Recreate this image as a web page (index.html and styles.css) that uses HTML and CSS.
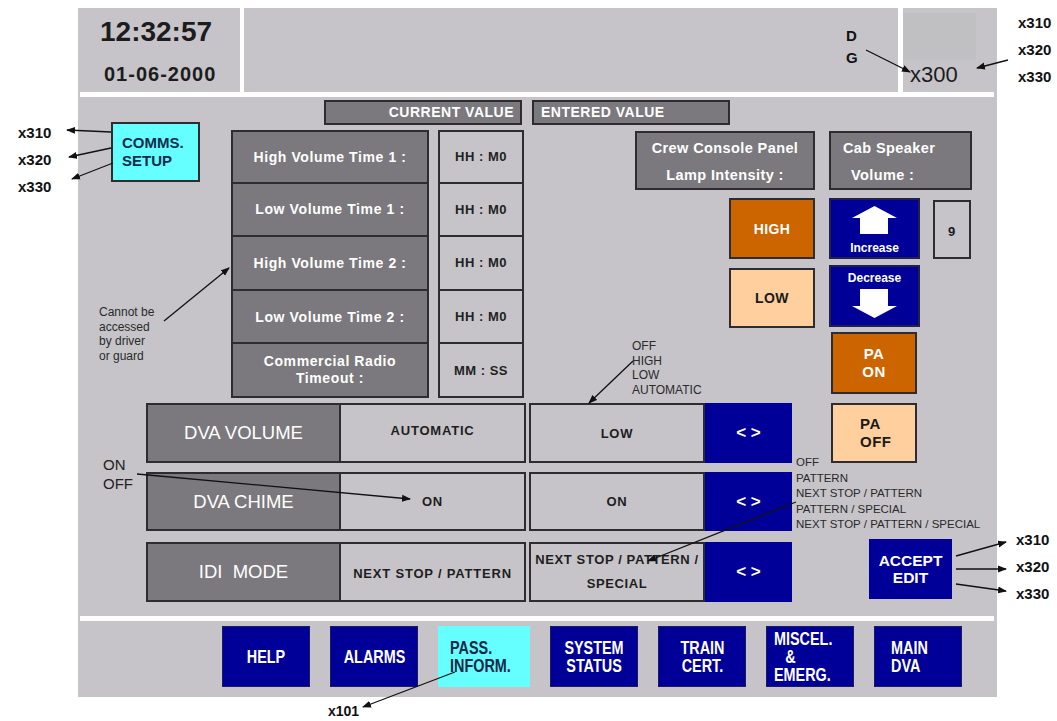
FILE: index.html
```html
<!DOCTYPE html>
<html>
<head>
    <title> Comms Setup </title>
    <link rel="stylesheet" href="styles.css">
</head>
<body>
<div class="sheet">
    <div class="panel">
        <div class="header">
            <div class="clock">
                <div class="time">12:32:57</div>
                <div class="date">01-06-2000</div>
            </div>
            <div class="message"></div>
            <div class="status">
                <div class="status-lamp"></div>
                <div class="status-id">x300</div>
            </div>
        </div>
        <div class="rule"></div>

        <div class="work">
            <div class="tabs">
                <div class="tab tab-current">CURRENT VALUE</div>
                <div class="tab tab-entered">ENTERED VALUE</div>
            </div>

            <div class="upper">
                <div class="comms">COMMS.<br>SETUP</div>

                <div class="times">
                    <div class="time-label">High Volume Time 1 :</div>
                    <div class="time-value">HH : M0</div>
                    <div class="time-label">Low Volume Time 1 :</div>
                    <div class="time-value">HH : M0</div>
                    <div class="time-label">High Volume Time 2 :</div>
                    <div class="time-value">HH : M0</div>
                    <div class="time-label">Low Volume Time 2 :</div>
                    <div class="time-value">HH : M0</div>
                    <div class="time-label time-label-small">Commercial Radio<br>Timeout :</div>
                    <div class="time-value">MM : SS</div>
                </div>

                <div class="controls">
                    <div class="control-heads">
                        <div class="head head-lamp">Crew Console Panel<br>Lamp Intensity :</div>
                        <div class="head head-cab">Cab Speaker<br><span class="indent">Volume :</span></div>
                    </div>
                    <div class="control-body">
                        <div class="lamp-col">
                            <div class="key key-orange key-high">HIGH</div>
                            <div class="key key-peach key-low">LOW</div>
                        </div>
                        <div class="volume-col">
                            <div class="key key-navy key-inc">
                                <svg class="arrow-up" width="45" height="28" viewBox="0 0 45 28"><path d="M22.5 0 L45 12 L36 12 L36 28 L8 28 L8 12 L0 12 Z" fill="#fff"/></svg>
                                <span class="key-small">Increase</span>
                            </div>
                            <div class="key key-navy key-dec">
                                <span class="key-small">Decrease</span>
                                <svg class="arrow-down" width="45" height="29" viewBox="0 0 45 29"><path d="M8 0 L36 0 L36 17 L45 17 L22.5 29 L0 17 L8 17 Z" fill="#fff"/></svg>
                            </div>
                            <div class="key key-orange key-pa-on">PA<br>ON</div>
                        </div>
                        <div class="level">9</div>
                    </div>
                </div>
            </div>

            <div class="lower">
                <div class="dva">
                    <div class="dva-row">
                        <div class="dva-label">DVA VOLUME</div>
                        <div class="dva-current dva-up">AUTOMATIC</div>
                        <div class="dva-entered">LOW</div>
                        <div class="dva-step">&lt; &gt;</div>
                    </div>
                    <div class="dva-row dva-row-chime">
                        <div class="dva-label">DVA CHIME</div>
                        <div class="dva-current">ON</div>
                        <div class="dva-entered">ON</div>
                        <div class="dva-step">&lt; &gt;</div>
                    </div>
                    <div class="dva-row dva-row-idi">
                        <div class="dva-label">IDI&nbsp; MODE</div>
                        <div class="dva-current dva-down">NEXT STOP / PATTERN</div>
                        <div class="dva-entered dva-two">NEXT STOP / PATTERN /<br>SPECIAL</div>
                        <div class="dva-step">&lt; &gt;</div>
                    </div>
                </div>
                <div class="side">
                    <div class="key key-peach key-pa-off">PA<br>OFF</div>
                    <div class="key key-navy key-accept">ACCEPT<br>EDIT</div>
                </div>
            </div>
        </div>

        <div class="rule"></div>
        <div class="nav">
            <div class="nav-btn"><span class="nav-text">HELP</span></div>
            <div class="nav-btn"><span class="nav-text">ALARMS</span></div>
            <div class="nav-btn nav-active nav-left"><span class="nav-text">PASS.<br>INFORM.</span></div>
            <div class="nav-btn"><span class="nav-text">SYSTEM<br>STATUS</span></div>
            <div class="nav-btn"><span class="nav-text">TRAIN<br>CERT.</span></div>
            <div class="nav-btn nav-left nav-misc"><span class="nav-text">MISCEL.<br><span class="amp">&amp;</span><br>EMERG.</span></div>
            <div class="nav-btn nav-left nav-main"><span class="nav-text">MAIN<br>DVA</span></div>
        </div>
    </div>

    <!-- callouts drawn over the screen -->
    <svg class="callouts" width="1057" height="721" viewBox="0 0 1057 721">
        <defs>
            <marker id="head" markerWidth="9" markerHeight="8" refX="8" refY="4" orient="auto" markerUnits="userSpaceOnUse">
                <path d="M0 0.5 L9 4 L0 7.5 Z" fill="#111"/>
            </marker>
        </defs>
        <g stroke="#111" stroke-width="1.3" fill="none" marker-end="url(#head)">
            <path d="M866 50 L910 72"/>
            <path d="M1008 60 L977 68"/>
            <path d="M111 132 L67 130"/>
            <path d="M111 148 L69 157"/>
            <path d="M113 163 L72 179"/>
            <path d="M164 321 L229 268"/>
            <path d="M633 361 L589 403"/>
            <path d="M137 474 L410 499"/>
            <path d="M796 502 L648 561"/>
            <path d="M956 556 L1006 542"/>
            <path d="M956 569 L1006 569"/>
            <path d="M956 584 L1006 591"/>
            <path d="M455 672 L363 707"/>
        </g>
    </svg>

    <div class="note note-d">D<br>G</div>
    <div class="note note-ref note-top">x310<br>x320<br>x330</div>
    <div class="note note-ref note-left">x310<br>x320<br>x330</div>
    <div class="note note-ref note-accept">x310<br>x320<br>x330</div>
    <div class="note note-ref note-nav">x101</div>
    <div class="note note-access">Cannot be<br>accessed<br>by driver<br>or guard</div>
    <div class="note note-onoff">ON<br>OFF</div>
    <div class="note note-volume">OFF<br>HIGH<br>LOW<br>AUTOMATIC</div>
    <div class="note note-mode">OFF<br>PATTERN<br>NEXT STOP / PATTERN<br>PATTERN / SPECIAL<br>NEXT STOP / PATTERN / SPECIAL</div>
</div>
</body>
</html>
```

FILE: styles.css
```css
* {
    box-sizing: border-box;
}

body {
    margin: 0;
    background-color: #fff;
    font-family: "Liberation Sans", Arial, sans-serif;
    color: #1a1a1a;
}

.sheet {
    position: relative;
    width: 1057px;
    height: 721px;
    padding: 8px 0 0 78px;
}

.panel {
    width: 919px;
    height: 689px;
    background-color: #c6c4c8;
}

/* header */
.header {
    display: flex;
    height: 84px;
    background-color: #fff;
}

.clock {
    width: 162px;
    padding: 10px 0 0 22px;
    background-color: #c6c4c8;
}

.time {
    font-size: 28px;
    line-height: 28px;
    font-weight: bold;
    color: #1c1c1c;
}

.date {
    margin: 18px 0 0 4px;
    font-size: 20px;
    line-height: 20px;
    font-weight: bold;
    letter-spacing: 1px;
    color: #1c1c1c;
}

.message {
    width: 654px;
    margin-left: 4px;
    background-color: #c6c4c8;
}

.status {
    width: 94px;
    margin-left: 5px;
    background-color: #c6c4c8;
}

.status-lamp {
    width: 73px;
    height: 47px;
    margin-top: 5px;
    background-color: #c0bfc1;
}

.status-id {
    margin-top: 4px;
    padding-left: 7px;
    font-size: 22px;
    line-height: 22px;
    color: #1c1c1c;
}

.rule {
    height: 5px;
    margin: 0 3px 0 2px;
    background-color: #fff;
}

/* working area */
.work {
    height: 519px;
    padding-top: 3px;
}

.tabs {
    display: flex;
    gap: 10px;
    margin-left: 246px;
}

.tab {
    width: 198px;
    height: 25px;
    border: 2px solid #2e2c30;
    background-color: #7b797d;
    color: #fff;
    font-size: 14px;
    line-height: 21px;
    font-weight: bold;
    letter-spacing: 0.5px;
}

.tab-current {
    text-align: right;
    padding-right: 6px;
}

.tab-entered {
    padding-left: 7px;
}

.upper {
    display: flex;
    height: 278px;
}

.comms {
    width: 89px;
    height: 60px;
    margin: -3px 0 0 33px;
    padding: 10px 0 0 9px;
    border: 2px solid #2e2c30;
    background-color: #66ffff;
    color: #102c4c;
    font-size: 15px;
    line-height: 18px;
    font-weight: bold;
}

.times {
    display: grid;
    grid-template-columns: 198px 86px;
    grid-template-rows: repeat(5, 53.6px);
    column-gap: 9px;
    margin: 5px 0 0 31px;
}

.times > :nth-child(n+3) {
    border-top: none;
}

.time-label,
.time-value {
    display: flex;
    align-items: center;
    justify-content: center;
    text-align: center;
    border: 2px solid #2e2c30;
    font-weight: bold;
}

.time-label {
    background-color: #7b797d;
    color: #fff;
    font-size: 14px;
    letter-spacing: 0.6px;
}

.time-label-small {
    font-size: 14px;
    line-height: 17px;
}

.time-value {
    color: #222;
    font-size: 13px;
    letter-spacing: 0.5px;
}

.controls {
    margin: 6px 0 0 111px;
}

.control-heads {
    display: flex;
    gap: 14px;
}

.head {
    height: 59px;
    padding-top: 2px;
    border: 2px solid #2e2c30;
    background-color: #7b797d;
    color: #fff;
    font-size: 14.5px;
    line-height: 27px;
    font-weight: bold;
    letter-spacing: 0.4px;
}

.head-lamp {
    width: 180px;
    text-align: center;
}

.head-cab {
    width: 143px;
    padding-left: 12px;
}

.indent {
    padding-left: 8px;
}

.control-body {
    display: flex;
    margin-top: 8px;
}

.lamp-col {
    display: flex;
    flex-direction: column;
    gap: 9px;
    margin-left: 94px;
}

.volume-col {
    display: flex;
    flex-direction: column;
    margin-left: 14px;
}

.key {
    display: flex;
    flex-direction: column;
    align-items: center;
    justify-content: center;
    text-align: center;
    border: 2px solid #2e2c30;
    font-weight: bold;
}

.key-orange {
    background-color: #cc6400;
    color: #fff;
}

.key-peach {
    background-color: #ffd09d;
    color: #1a1a1a;
}

.key-navy {
    background-color: #000099;
    color: #fff;
    border-color: #20204a;
}

.key-high,
.key-low {
    width: 86px;
    height: 61px;
    font-size: 14px;
    letter-spacing: 0.4px;
}

.key-low {
    height: 60px;
}

.key-inc,
.key-dec {
    width: 91px;
    height: 61px;
    justify-content: flex-start;
}

.key-inc {
    padding-top: 6px;
}

.key-dec {
    height: 62px;
    margin-top: 6px;
    padding-top: 4px;
}

.key-small {
    font-size: 12px;
    line-height: 14px;
}

.arrow-up {
    margin-bottom: 7px;
}

.arrow-down {
    margin-top: 4px;
}

.key-pa-on {
    width: 86px;
    height: 62px;
    margin: 5px 0 0 2px;
    font-size: 15px;
    line-height: 18px;
    letter-spacing: 0.5px;
}

.level {
    width: 38px;
    height: 59px;
    margin: 2px 0 0 13px;
    padding-top: 22px;
    padding-left: 13px;
    border: 2px solid #2e2c30;
    font-size: 13px;
    font-weight: bold;
}

/* DVA rows */
.lower {
    display: flex;
}

.dva {
    margin-left: 68px;
}

.dva-row {
    display: flex;
    height: 60px;
}

.dva-row-chime {
    height: 59px;
    margin-top: 9px;
}

.dva-row-idi {
    margin-top: 11px;
}

.dva-label,
.dva-current,
.dva-entered,
.dva-step {
    display: flex;
    align-items: center;
    justify-content: center;
    text-align: center;
}

.dva-label {
    width: 195px;
    border: 2px solid #2e2c30;
    background-color: #7b797d;
    color: #fff;
    font-size: 18.5px;
}

.dva-current,
.dva-entered {
    border: 2px solid #2e2c30;
    color: #1e1e1e;
    font-size: 13px;
    font-weight: bold;
    letter-spacing: 0.8px;
}

.dva-current {
    width: 185px;
    border-left: none;
}

.dva-up {
    padding-bottom: 6px;
}

.dva-down {
    padding-top: 2px;
}

.dva-entered {
    width: 176px;
    margin-left: 3px;
}

.dva-two {
    line-height: 24px;
    letter-spacing: 0.6px;
}

.dva-step {
    width: 87px;
    background-color: #000099;
    color: #fff;
    font-size: 17px;
    font-weight: bold;
}

.side {
    display: flex;
    flex-direction: column;
    margin-left: 39px;
}

.key-pa-off {
    width: 86px;
    height: 60px;
    align-items: flex-start;
    padding-left: 27px;
    text-align: left;
    font-size: 15px;
    line-height: 18px;
    letter-spacing: 0.5px;
}

.key-accept {
    width: 83px;
    height: 60px;
    margin: 76px 0 0 38px;
    font-size: 15.5px;
    line-height: 17px;
    border-color: #000099;
}

/* bottom navigation */
.nav {
    display: flex;
    gap: 20px;
    height: 76px;
    padding: 5px 0 0 144px;
}

.nav-btn {
    display: flex;
    align-items: center;
    justify-content: center;
    width: 88px;
    height: 61px;
    border: 1px solid #1c1c5c;
    background-color: #000099;
    color: #fff;
    font-size: 18px;
    line-height: 18px;
    font-weight: bold;
    text-align: center;
}

/* narrow face: the panel font is a condensed Arial */
.nav-text {
    display: inline-block;
    transform: scaleX(0.8);
    transform-origin: center;
}

.nav-left {
    justify-content: flex-start;
    text-align: left;
}

.nav-left .nav-text {
    transform-origin: left center;
}

.nav-active {
    width: 92px;
    padding-left: 11px;
    border-color: #66ffff;
    background-color: #66ffff;
    color: #16294a;
}

.nav-misc {
    padding-left: 7px;
}

.nav-main {
    padding-left: 16px;
}

.amp {
    padding-left: 14px;
}

/* callouts */
.callouts {
    position: absolute;
    top: 0;
    left: 0;
    pointer-events: none;
}

.note {
    position: absolute;
    color: #111;
}

.note-ref {
    font-size: 15px;
    font-weight: bold;
}

.note-d {
    top: 25px;
    left: 846px;
    font-size: 15px;
    line-height: 22px;
    font-weight: bold;
}

.note-top {
    top: 9px;
    left: 1018px;
    line-height: 27px;
}

.note-left {
    top: 119px;
    left: 18px;
    line-height: 27px;
}

.note-accept {
    top: 526px;
    left: 1016px;
    line-height: 27px;
}

.note-nav {
    top: 703px;
    left: 328px;
    font-size: 14px;
}

.note-access {
    top: 305px;
    left: 99px;
    font-size: 12px;
    line-height: 14.5px;
    color: #2a2a2a;
}

.note-onoff {
    top: 455px;
    left: 103px;
    font-size: 15px;
    line-height: 19px;
    color: #222;
}

.note-volume {
    top: 339px;
    left: 632px;
    font-size: 12px;
    line-height: 14.7px;
    color: #2a2a2a;
}

.note-mode {
    top: 455px;
    left: 796px;
    font-size: 11.5px;
    line-height: 15.6px;
    color: #2a2a2a;
}
```
